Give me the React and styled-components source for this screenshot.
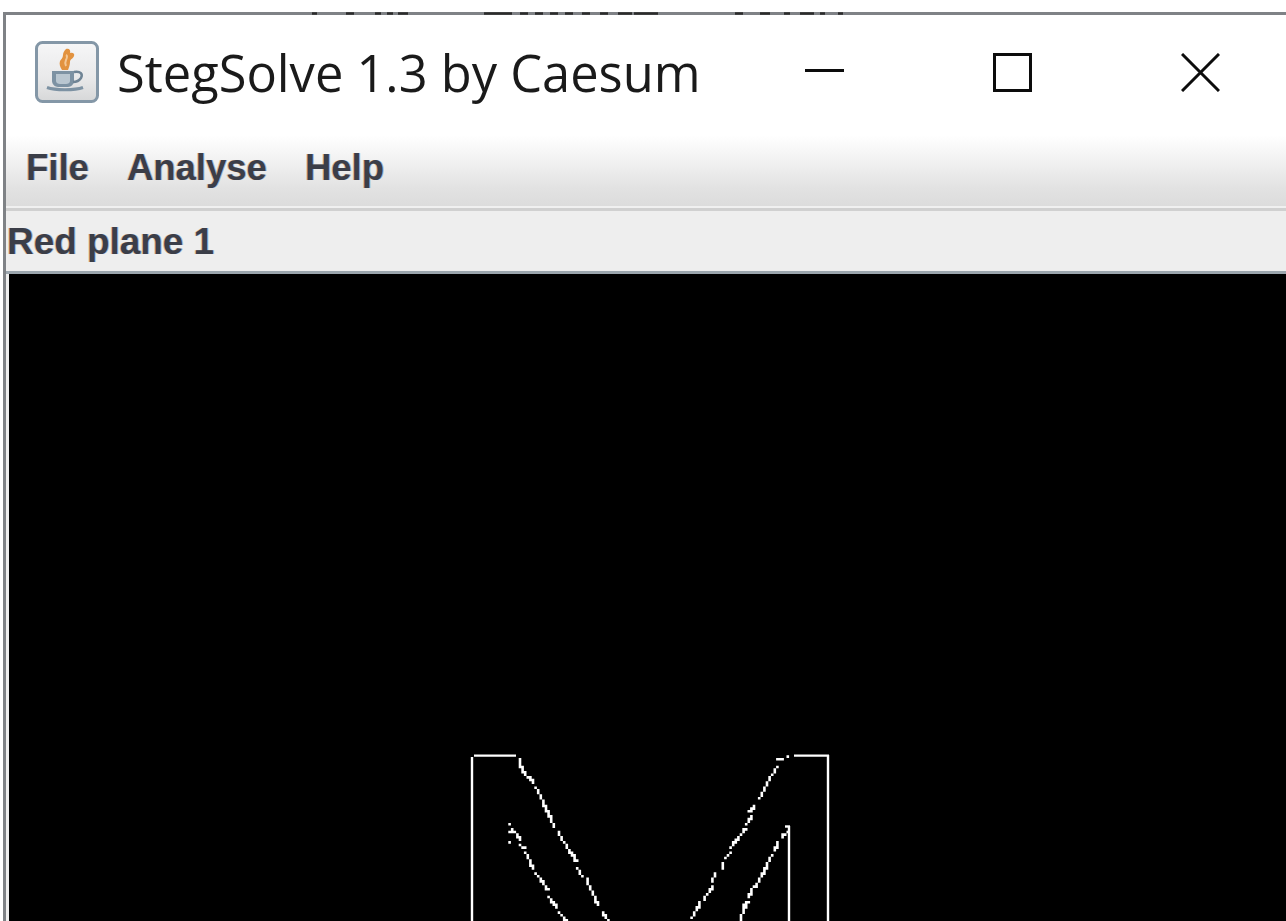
import styled, { createGlobalStyle } from "styled-components";

const GlobalStyle = createGlobalStyle`
  html, body {
    margin: 0;
    background: #fff;
  }
  #root {
    height: 921px;
    overflow: hidden;
  }
`;

const Frame = styled.div`
  height: 909px;
  padding: 12px 0 0 3px;
  background: #fff;
`;

const Window = styled.div`
  display: flex;
  flex-direction: column;
  height: 909px;
  border-left: 3px solid #7f8286;
  background: #eee;
`;

const TopEdge = styled.svg`
  display: block;
  flex: none;
  width: calc(100% + 3px);
  height: 3px;
  margin-left: -3px;
`;

const TitleBar = styled.div`
  display: flex;
  flex: none;
  align-items: center;
  height: 120px;
  padding: 0 66px 6px 29px;
  box-sizing: border-box;
  background: #fff;
`;

const AppIcon = styled.svg`
  flex: none;
  width: 64px;
  height: 62px;
`;

const Title = styled.span`
  margin-left: 18px;
  font: 400 50.6px "Open Sans", "Noto Sans", sans-serif;
  color: #1a1a1a;
  white-space: nowrap;
`;

const Controls = styled.div`
  display: flex;
  gap: 149px;
  margin-left: auto;
`;

const ControlIcon = styled.svg`
  display: block;
  width: 39px;
  height: 39px;
  fill: none;
  stroke: #0c0c0c;
  stroke-width: 3;
`;

const MenuBar = styled.div`
  display: flex;
  flex: none;
  align-items: center;
  gap: 38px;
  height: 73px;
  padding: 0 0 6px 20px;
  box-sizing: border-box;
  background: linear-gradient(#fff 0%, #f2f2f2 35%, #e2e2e2 75%, #dcdcdc 100%);
  border-bottom: 2px solid #f0f0f0;
`;

const boldText = `
  font-family: "Liberation Sans", Arial, sans-serif;
  font-weight: 700;
  color: #3b3e48;
  text-shadow: -1px 0 rgba(196, 132, 70, 0.45), 1px 0 rgba(80, 120, 180, 0.45);
  white-space: nowrap;
`;

const MenuItem = styled.span`
  ${boldText}
  font-size: 36.5px;
`;

const Caption = styled.div`
  ${boldText}
  flex: none;
  height: 66px;
  padding-left: 1px;
  box-sizing: border-box;
  border-top: 3px solid #d0d0d0;
  border-bottom: 3px solid #9ca6ae;
  background: #eee;
  font-size: 36.9px;
  line-height: 62px;
`;

const Viewer = styled.div`
  flex: 1;
  min-height: 0;
  margin-left: 3px;
  background: #000;
`;

const Plane = styled.svg`
  display: block;
  width: 100%;
  height: 100%;
`;

// straight edges of the letter outline, in page pixels
const EDGES = [
  [472, 757, 472, 921],
  [474, 755.6, 516, 755.6],
  [794, 755.6, 829, 755.6],
  [828, 755, 828, 921],
  [785, 826.5, 790, 826.5],
  [789, 826, 789, 921],
];

// slanted edges come out broken and stair-stepped
const TRAILS = [
  [519.3, 758.3, 522.7, 771.7],
  [525, 773.3, 533.3, 781.7],
  [536, 788.3, 555, 826.7],
  [558.3, 833.3, 576.7, 861.7],
  [577.3, 867.3, 581.7, 875],
  [586.7, 880, 598.3, 905],
  [603.3, 912.7, 608.3, 921],

  [788, 755.7, 788, 755.7],
  [778.3, 760, 783.3, 759],
  [778.3, 766.7, 770, 776.7],
  [768.3, 780, 760, 798.3],
  [755, 805, 750, 811.7],
  [751.7, 816.7, 746.7, 823.3],
  [745, 829, 731.7, 846.7],
  [731.7, 851.7, 725, 859.3],
  [721.7, 864, 721.7, 869.3],
  [716, 874, 711.7, 881.7],
  [712.7, 886.7, 703.3, 900],
  [700, 903.3, 692.7, 916.7],

  [510, 823.3, 510, 823.3],
  [510, 833.3, 513.3, 830],
  [515, 831.7, 520, 839.3],
  [510, 842.7, 510, 842.7],
  [520, 846, 525, 848.3],
  [526, 853.3, 533.3, 868.3],
  [536, 874.3, 548.3, 890],
  [548.3, 896.7, 556.7, 906.7],
  [558.3, 911.7, 566, 921],

  [786.7, 833.3, 781.7, 836.7],
  [778.3, 843.3, 775, 850],
  [773.3, 855, 768.3, 858.3],
  [768.3, 861.7, 761.7, 876.7],
  [760, 880, 755, 886.7],
  [751.7, 890, 748.3, 898.3],
  [748.3, 902.7, 743.3, 905],
  [745, 906.7, 740, 920],
];

const CELL = 2.6;

// snap a line onto a coarse grid, one square per step
const trailPath = ([x1, y1, x2, y2]) => {
  const steps = Math.max(1, Math.ceil(Math.hypot(x2 - x1, y2 - y1) / (CELL * 0.8)));
  let d = "";
  for (let i = 0; i <= steps; i++) {
    const x = Math.round((x1 + ((x2 - x1) * i) / steps) / CELL) * CELL;
    const y = Math.round((y1 + ((y2 - y1) * i) / steps) / CELL) * CELL;
    d += `M${x - CELL / 2} ${y - CELL / 2}h${CELL}v${CELL}h${-CELL}z`;
  }
  return d;
};

const JavaIcon = () => (
  <AppIcon viewBox="0 0 64 62">
    <defs>
      <linearGradient id="iconFace" x1="0" y1="0" x2="0" y2="1">
        <stop offset="0" stopColor="#f6f6f7" />
        <stop offset="0.6" stopColor="#e9e9ea" />
        <stop offset="1" stopColor="#d6d7d8" />
      </linearGradient>
    </defs>
    <rect x="1.5" y="1.5" width="61" height="59" rx="6" fill="url(#iconFace)" stroke="#8497a7" strokeWidth="3" />
    {/* steam */}
    <path d="M31 8c3-1 5 1 4 4 3-1 5 1 4 3-1 3-4 3-4 6 0 3-1 5-2 8h-6c-2-3-3-6-2-9 1-2 3-3 3-6 0-2 1-4 3-6z" fill="#e2923f" />
    <path d="M31 14c2 1 1 3 0 5s-1 4 0 6" fill="none" stroke="#f4c795" strokeWidth="2" />
    {/* cup, handle and saucer */}
    <path d="M17 30h22v10c0 3-3 6-6 6h-10c-3 0-6-3-6-6z" fill="#7d92a3" />
    <path d="M21 33h14v7c0 2-2 3-4 3h-6c-2 0-4-1-4-3z" fill="#b9c6d0" />
    <path d="M39 31c7-1 9 2 7 6-2 3-4 4-8 4" fill="none" stroke="#6f8495" strokeWidth="2.5" />
    <path d="M12 46.5c8 3 28 3 36 0" fill="none" stroke="#7d92a3" strokeWidth="3" />
  </AppIcon>
);

const App = () => (
  <>
    <GlobalStyle />
    <Frame>
      <Window>
        <TopEdge viewBox="3 0 1283 3" preserveAspectRatio="none">
          <rect x="3" y="0" width="1283" height="3" fill="#7f8286" />
          <path
            d="M312 1.5h5M346 1.5h8M375 1.5h6M387 1.5h6M398 1.5h10M484 1.5h28M520 1.5h8M535 1.5h8M550 1.5h8M565 1.5h8M582 1.5h8M600 1.5h8M618 1.5h14M634 1.5h24M735 1.5h8M760 1.5h10M784 1.5h6M800 1.5h14M820 1.5h5M838 1.5h5"
            stroke="#2b2b2b"
            strokeWidth="2.4"
            fill="none"
          />
        </TopEdge>
        <TitleBar>
          <JavaIcon />
          <Title>StegSolve 1.3 by Caesum</Title>
          <Controls>
            <ControlIcon viewBox="0 0 39 39">
              <path d="M0 17.5h39" />
            </ControlIcon>
            <ControlIcon viewBox="0 0 39 39">
              <rect x="1.5" y="1.5" width="36" height="36" />
            </ControlIcon>
            <ControlIcon viewBox="0 0 39 39">
              <path d="M1 1l37 37M38 1L1 38" />
            </ControlIcon>
          </Controls>
        </TitleBar>
        <MenuBar>
          <MenuItem>File</MenuItem>
          <MenuItem>Analyse</MenuItem>
          <MenuItem>Help</MenuItem>
        </MenuBar>
        <Caption>Red plane 1</Caption>
        <Viewer>
          <Plane viewBox="9 274 1277 647" preserveAspectRatio="xMinYMin slice">
            {EDGES.map(([x1, y1, x2, y2]) => (
              <line key={`${x1}-${y1}-${x2}`} x1={x1} y1={y1} x2={x2} y2={y2} stroke="#fff" strokeWidth="2.4" />
            ))}
            <path d={TRAILS.map(trailPath).join("")} fill="#fff" />
          </Plane>
        </Viewer>
      </Window>
    </Frame>
  </>
);

export default App;
